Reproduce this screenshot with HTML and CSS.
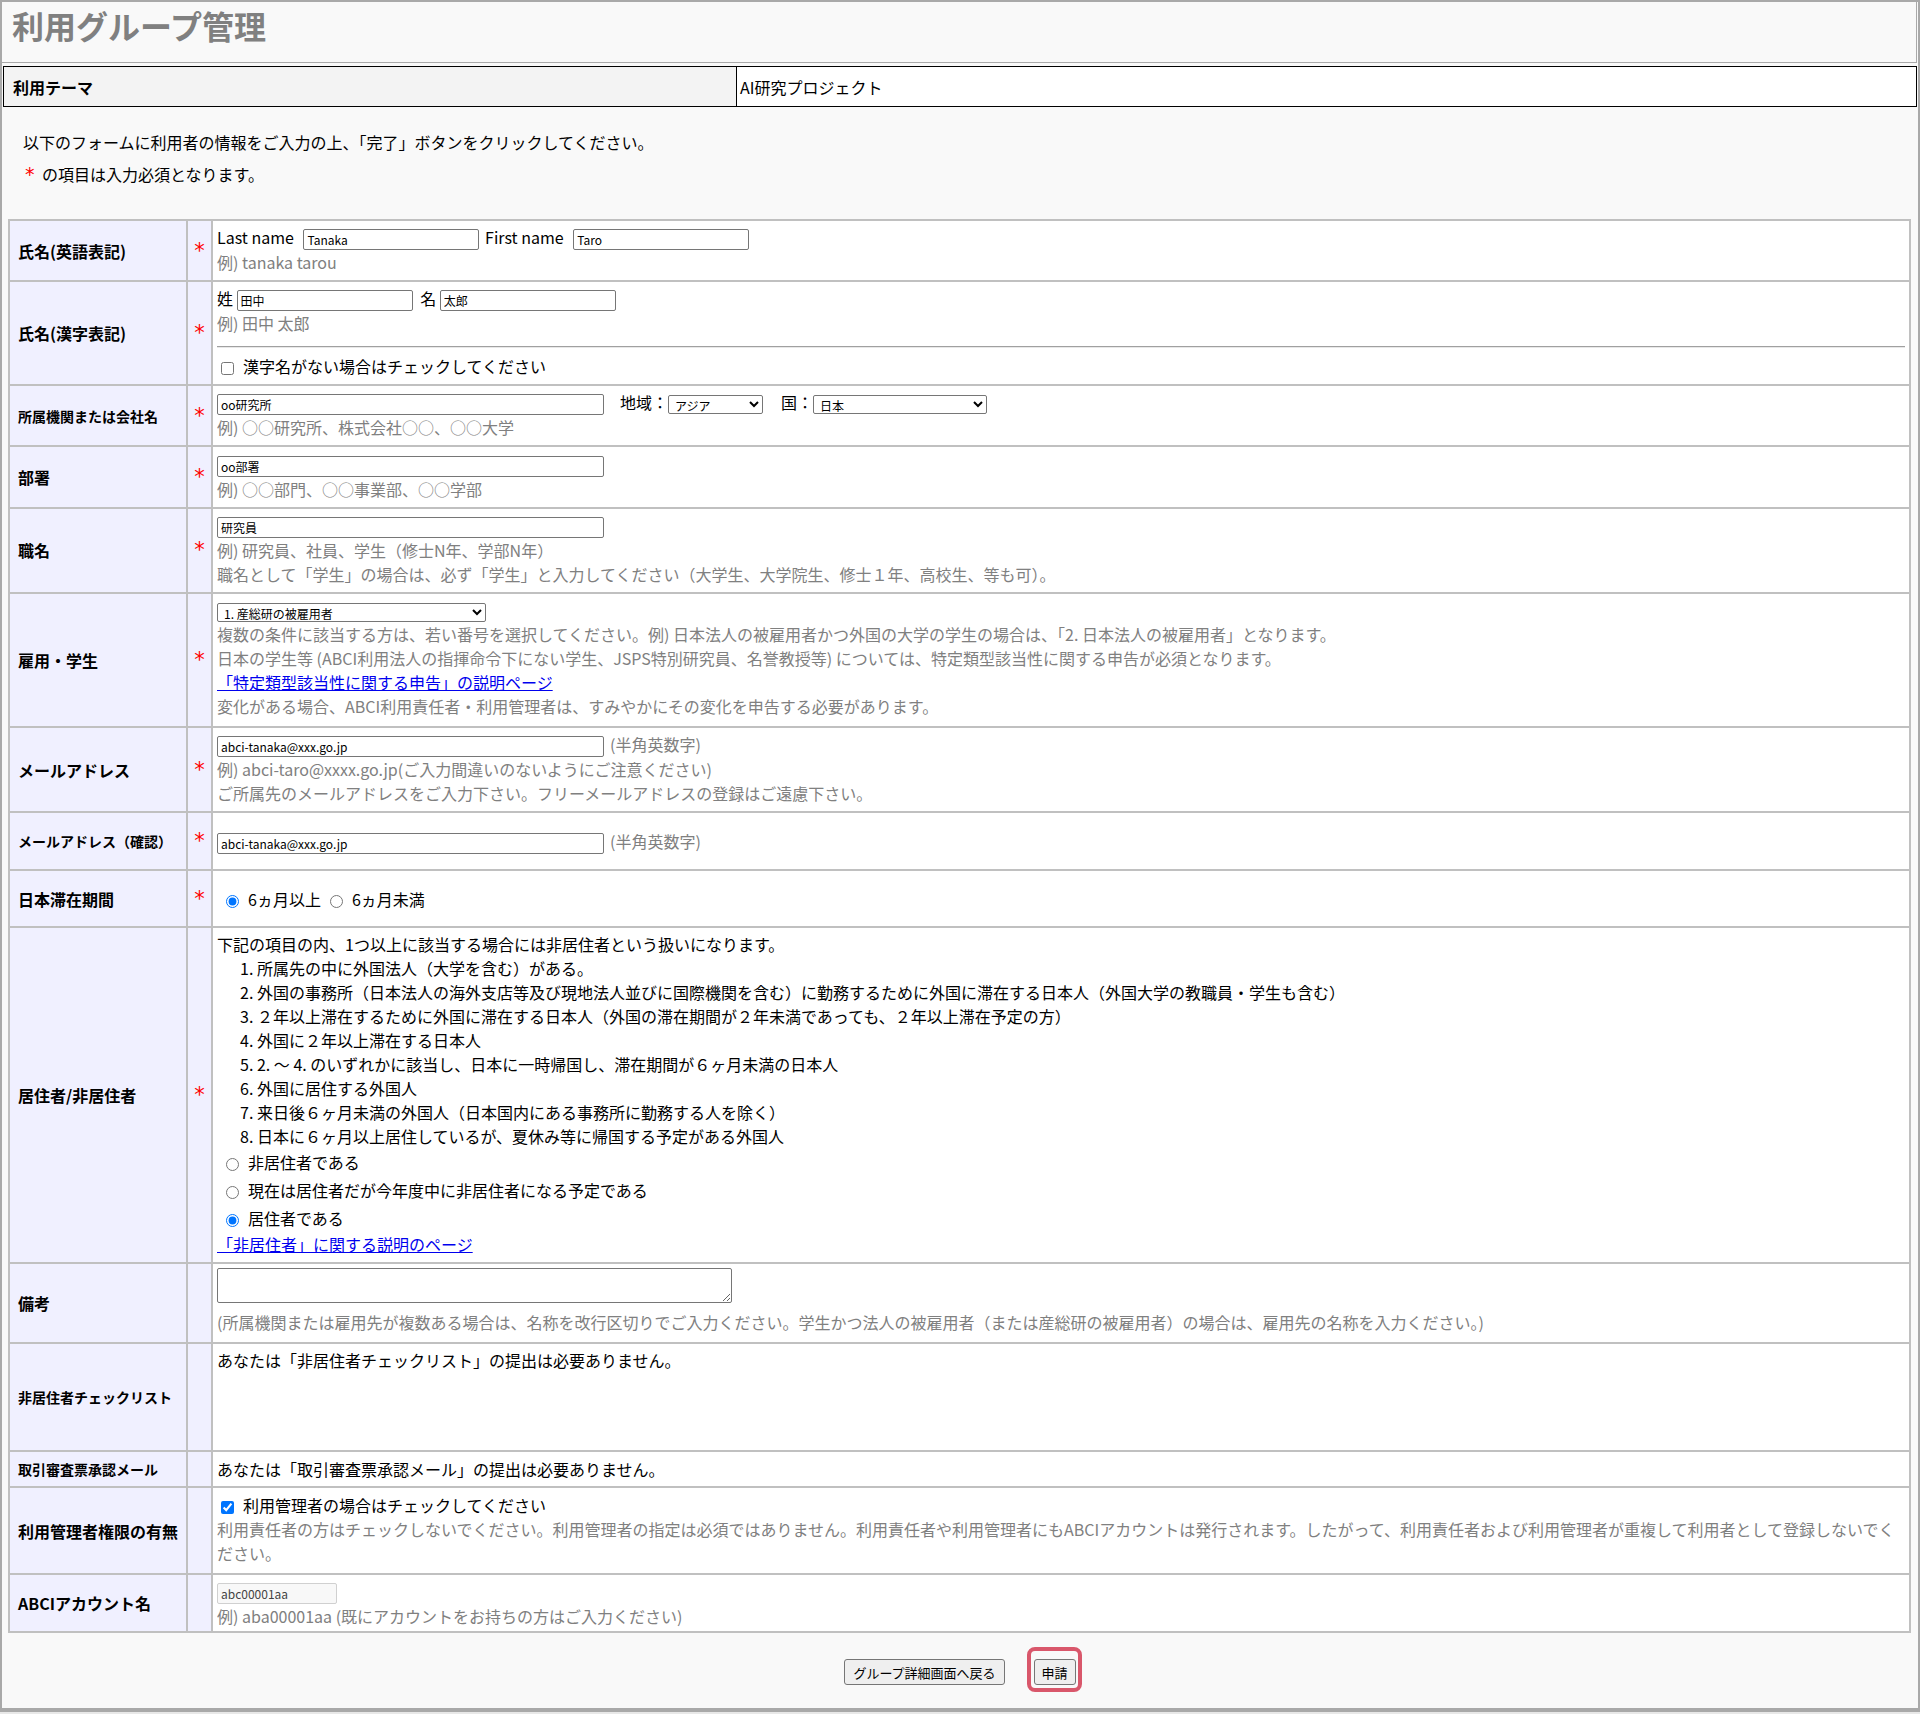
FILE: index.html
```html
<!DOCTYPE html>
<html lang="ja">
<head>
<meta charset="utf-8">
<title>利用グループ管理</title>
<link rel="stylesheet" href="styles.css">
</head>
<body>
<div class="page">
  <div class="header"><h1 class="title">利用グループ管理</h1></div>
  <table class="theme">
    <tr><th>利用テーマ</th><td>AI研究プロジェクト</td></tr>
  </table>
  <div class="intro">
    <p>以下のフォームに利用者の情報をご入力の上、「完了」ボタンをクリックしてください。</p>
    <p><span class="req">*</span> の項目は入力必須となります。</p>
  </div>
  <table class="form">
    <colgroup><col class="cl"><col class="cs"><col></colgroup>
    <tr>
      <td class="l">氏名(英語表記)</td><td class="s">*</td>
      <td class="c">Last name <input class="in in-name en" type="text" value="Tanaka"> First name <input class="in in-name en" type="text" value="Taro"><div class="hint">例) tanaka tarou</div></td>
    </tr>
    <tr>
      <td class="l">氏名(漢字表記)</td><td class="s">*</td>
      <td class="c">姓 <input class="in in-name jp" type="text" value="田中"> 名 <input class="in in-name" type="text" value="太郎"><div class="hint">例) 田中 太郎</div><hr class="rule"><label class="cb"><input type="checkbox">漢字名がない場合はチェックしてください</label></td>
    </tr>
    <tr>
      <td class="l sm">所属機関または会社名</td><td class="s">*</td>
      <td class="c"><input class="in in-long" type="text" value="oo研究所"><span class="fld fld-region">地域：</span><select class="sel sel-region"><option>アジア</option></select><span class="fld fld-country">国：</span><select class="sel sel-country"><option>日本</option></select><div class="hint">例) ○○研究所、株式会社○○、○○大学</div></td>
    </tr>
    <tr>
      <td class="l">部署</td><td class="s">*</td>
      <td class="c"><input class="in in-long" type="text" value="oo部署"><div class="hint">例) ○○部門、○○事業部、○○学部</div></td>
    </tr>
    <tr>
      <td class="l">職名</td><td class="s">*</td>
      <td class="c"><input class="in in-long" type="text" value="研究員"><div class="hint">例) 研究員、社員、学生（修士N年、学部N年）</div><div class="hint">職名として「学生」の場合は、必ず「学生」と入力してください（大学生、大学院生、修士１年、高校生、等も可）。</div></td>
    </tr>
    <tr>
      <td class="l">雇用・学生</td><td class="s">*</td>
      <td class="c emp"><select class="sel sel-emp"><option>1. 産総研の被雇用者</option></select>
        <div class="hint">複数の条件に該当する方は、若い番号を選択してください。例) 日本法人の被雇用者かつ外国の大学の学生の場合は、「2. 日本法人の被雇用者」となります。</div>
        <div class="hint">日本の学生等 (ABCI利用法人の指揮命令下にない学生、JSPS特別研究員、名誉教授等) については、特定類型該当性に関する申告が必須となります。</div>
        <div><a href="#">「特定類型該当性に関する申告」の説明ページ</a></div>
        <div class="hint">変化がある場合、ABCI利用責任者・利用管理者は、すみやかにその変化を申告する必要があります。</div></td>
    </tr>
    <tr>
      <td class="l">メールアドレス</td><td class="s">*</td>
      <td class="c"><input class="in in-long" type="text" value="abci-tanaka@xxx.go.jp"><span class="hint note">(半角英数字)</span><div class="hint">例) abci-taro@xxxx.go.jp(ご入力間違いのないようにご注意ください)</div><div class="hint">ご所属先のメールアドレスをご入力下さい。フリーメールアドレスの登録はご遠慮下さい。</div></td>
    </tr>
    <tr>
      <td class="l sm">メールアドレス（確認）</td><td class="s">*</td>
      <td class="c tall"><input class="in in-long" type="text" value="abci-tanaka@xxx.go.jp"><span class="hint note">(半角英数字)</span></td>
    </tr>
    <tr>
      <td class="l">日本滞在期間</td><td class="s">*</td>
      <td class="c tall"><label><input type="radio" name="stay" checked>6ヵ月以上</label><label><input type="radio" name="stay">6ヵ月未満</label></td>
    </tr>
    <tr>
      <td class="l">居住者/非居住者</td><td class="s">*</td>
      <td class="c">
        <div>下記の項目の内、1つ以上に該当する場合には非居住者という扱いになります。</div>
        <div class="list">
          <div>1. 所属先の中に外国法人（大学を含む）がある。</div>
          <div>2. 外国の事務所（日本法人の海外支店等及び現地法人並びに国際機関を含む）に勤務するために外国に滞在する日本人（外国大学の教職員・学生も含む）</div>
          <div>3. ２年以上滞在するために外国に滞在する日本人（外国の滞在期間が２年未満であっても、２年以上滞在予定の方）</div>
          <div>4. 外国に２年以上滞在する日本人</div>
          <div>5. 2. ～ 4. のいずれかに該当し、日本に一時帰国し、滞在期間が６ヶ月未満の日本人</div>
          <div>6. 外国に居住する外国人</div>
          <div>7. 来日後６ヶ月未満の外国人（日本国内にある事務所に勤務する人を除く）</div>
          <div>8. 日本に６ヶ月以上居住しているが、夏休み等に帰国する予定がある外国人</div>
        </div>
        <div class="rline"><label><input type="radio" name="res">非居住者である</label></div>
        <div class="rline"><label><input type="radio" name="res">現在は居住者だが今年度中に非居住者になる予定である</label></div>
        <div class="rline"><label><input type="radio" name="res" checked>居住者である</label></div>
        <div><a href="#">「非居住者」に関する説明のページ</a></div>
      </td>
    </tr>
    <tr>
      <td class="l">備考</td><td class="s"></td>
      <td class="c memo"><textarea class="ta"></textarea><div class="hint">(所属機関または雇用先が複数ある場合は、名称を改行区切りでご入力ください。学生かつ法人の被雇用者（または産総研の被雇用者）の場合は、雇用先の名称を入力ください。)</div></td>
    </tr>
    <tr>
      <td class="l sm">非居住者チェックリスト</td><td class="s"></td>
      <td class="c top">あなたは「非居住者チェックリスト」の提出は必要ありません。</td>
    </tr>
    <tr>
      <td class="l sm">取引審査票承認メール</td><td class="s"></td>
      <td class="c short">あなたは「取引審査票承認メール」の提出は必要ありません。</td>
    </tr>
    <tr>
      <td class="l">利用管理者権限の有無</td><td class="s"></td>
      <td class="c admin"><label class="cb"><input type="checkbox" checked>利用管理者の場合はチェックしてください</label><div class="hint">利用責任者の方はチェックしないでください。利用管理者の指定は必須ではありません。利用責任者や利用管理者にもABCIアカウントは発行されます。したがって、利用責任者および利用管理者が重複して利用者として登録しないでください。</div></td>
    </tr>
    <tr>
      <td class="l">ABCIアカウント名</td><td class="s"></td>
      <td class="c acct"><input class="in in-acct" type="text" value="abc00001aa" readonly><div class="hint">例) aba00001aa (既にアカウントをお持ちの方はご入力ください)</div></td>
    </tr>
  </table>
  <div class="actions">
    <button class="btn" type="button">グループ詳細画面へ戻る</button>
    <button class="btn primary" type="button">申請</button>
  </div>
</div>
</body>
</html>
```
FILE: styles.css
```css
* { box-sizing: border-box; }
html, body { margin: 0; padding: 0; }
body {
  background: #e8e8e8;
  font-family: "Noto Sans CJK JP", "Noto Sans", sans-serif;
  font-size: 16px;
  line-height: 24px;
  color: #000;
}
.page {
  width: 1920px;
  height: 1712px;
  border: 2px solid #a9a9a9;
  border-bottom-width: 4px;
  background: #f9f9f9;
}
.header {
  height: 61px;
  margin-right: 1px;
  border-right: 1px solid #a9a9a9;
  border-bottom: 1px solid #a9a9a9;
  padding: 1px 0 0 10px;
}
.title {
  margin: 0;
  font-size: 32px;
  line-height: 44px;
  font-weight: bold;
  color: #808080;
}
.theme {
  margin: 3px 0 0 1px;
  width: 1914px;
  border-collapse: collapse;
  border: 1px solid #000;
}
.theme th, .theme td {
  height: 40px;
  padding: 0;
  font-size: 16px;
  text-align: left;
}
.theme th {
  width: 733px;
  background: #f3f3f3;
  border-right: 1px solid #000;
  padding-left: 9px;
  font-weight: bold;
}
.theme td { background: #fff; padding-left: 3px; }
.intro { height: 112px; padding: 23px 0 0 21px; }
.intro p { margin: 0 0 8px; }
.req {
  color: #f00;
  font-family: "DejaVu Sans", sans-serif;
  font-size: 19px;
  margin: 0 4px 0 2px;
}

.form {
  margin-left: 6px;
  width: 1903px;
  border-collapse: collapse;
  table-layout: fixed;
}
.form td { border: 2px solid #c0c0c0; }
col.cl { width: 178px; }
col.cs { width: 25px; }
.l {
  background: #f0f0ff;
  font-weight: bold;
  padding: 0 2px 0 8px;
  vertical-align: middle;
  white-space: nowrap;
}
.l.sm { font-size: 14px; }
.s {
  background: #f0f0ff;
  color: #f00;
  text-align: center;
  font-family: "DejaVu Sans", sans-serif;
  font-size: 21px;
  line-height: 24px;
  padding: 0;
  vertical-align: middle;
}
.c {
  background: #fff;
  padding: 4px 4px 6px 4px;
  vertical-align: middle;
}
.c.emp { padding-bottom: 8px; }
.c.memo { padding-bottom: 8px; }
.c.admin { padding: 5px 4px 8px 4px; }
.c.acct { padding-bottom: 3px; }
.c.tall { padding: 16px 4px 15px 4px; }
.c.top { vertical-align: top; padding-bottom: 78px; }
.c.short { padding: 5px 4px 5px 4px; }
.hint { color: #808080; }
.note { margin-left: 6px; }

.in {
  font-family: inherit;
  font-size: 12px;
  height: 21px;
  border: 1px solid #767676;
  border-radius: 2px;
  padding: 0 3px;
  margin: 0;
  vertical-align: middle;
  background: #fff;
  color: #000;
}
.in-name { width: 176px; }
.in-name.en { margin: 0 2px 0 6px; }
.in-name.jp { margin-right: 4px; }
.in-long { width: 387px; }
.in-acct {
  width: 120px;
  border-color: #d0d0d0;
  background: #f8f8f8;
  color: #444;
}
.sel {
  font-family: inherit;
  font-size: 12px;
  height: 19px;
  border: 1px solid #767676;
  border-radius: 2px;
  background: #fff;
  color: #000;
  padding: 0 2px;
  margin: 0;
  vertical-align: middle;
}
.sel-region { width: 95px; }
.sel-country { width: 174px; }
.sel-emp { width: 269px; }
.fld { display: inline-block; }
.fld-region { margin-left: 16px; }
.fld-country { margin-left: 18px; }

.rule {
  border: 0;
  border-top: 1px solid #a0a0a0;
  border-bottom: 1px solid #e8e8e8;
  margin: 11px 0 6px;
}
.cb input {
  width: 13px;
  height: 13px;
  margin: 0 9px 0 4px;
  vertical-align: middle;
}
.c input[type=radio] {
  width: 13px;
  height: 13px;
  margin: 0 9px 0 9px;
  vertical-align: middle;
}
.list { padding-left: 23px; }
.rline { height: 28px; line-height: 28px; }
a { color: #0000ee; text-decoration: underline; }
.ta {
  display: block;
  width: 515px;
  height: 35px;
  border: 1px solid #767676;
  border-radius: 2px;
  margin: 0 0 7px;
  font-family: inherit;
  font-size: 12px;
}

.actions {
  height: 75px;
  display: flex;
  justify-content: center;
  align-items: center;
  gap: 29px;
  padding-top: 3px;
}
.btn {
  font-family: inherit;
  font-size: 13px;
  line-height: 1;
  height: 26px;
  padding: 0 8px;
  border: 1px solid #767676;
  border-radius: 3px;
  background: #efefef;
  color: #000;
}
.btn.primary { position: relative; padding: 0 7px; }
.btn.primary::after {
  content: "";
  position: absolute;
  top: -13px;
  left: -8px;
  right: -7px;
  bottom: -8px;
  border: 4px solid #d9576b;
  border-radius: 8px;
}
```
